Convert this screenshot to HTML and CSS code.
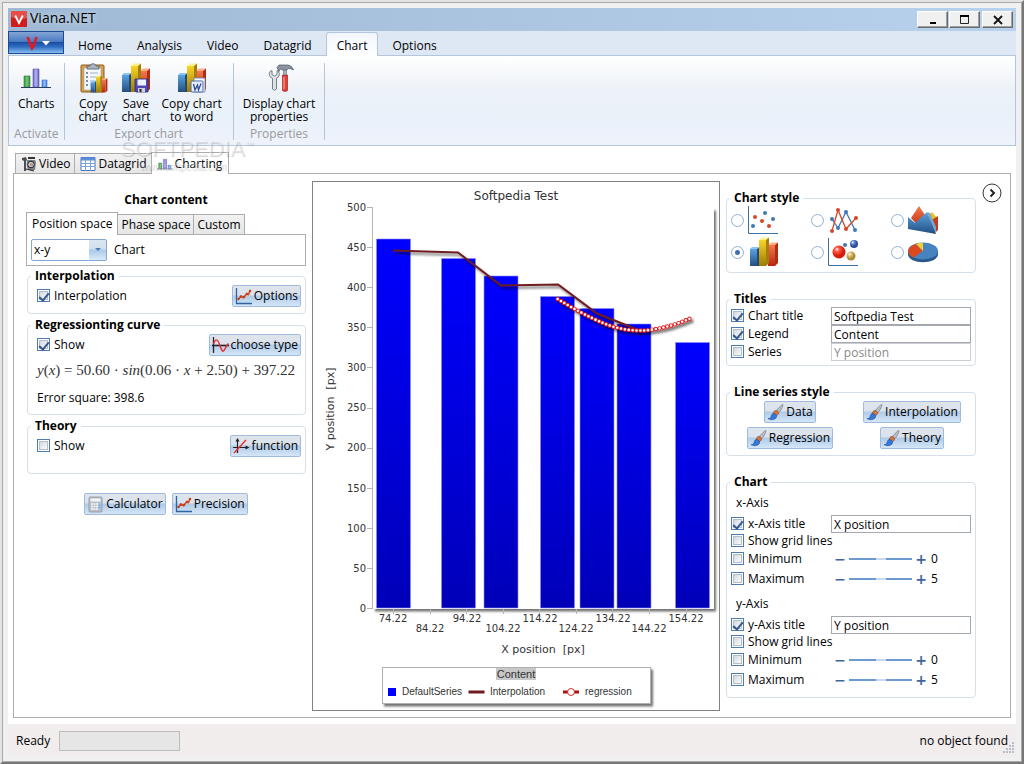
FILE: index.html
```html
<!DOCTYPE html>
<html lang="en">
<head>
<meta charset="utf-8">
<title>Viana.NET</title>
<link rel="stylesheet" href="styles.css">
</head>
<body>
<svg class="defs" width="0" height="0" aria-hidden="true">
  <defs>
    <linearGradient id="gBlue" x2="0" y2="1"><stop offset="0" stop-color="#5aa2e0"/><stop offset="1" stop-color="#234f80"/></linearGradient>
    <linearGradient id="gYel" x2="0" y2="1"><stop offset="0" stop-color="#f7d427"/><stop offset="1" stop-color="#9c7a08"/></linearGradient>
    <linearGradient id="gRed" x2="0" y2="1"><stop offset="0" stop-color="#f47a50"/><stop offset="1" stop-color="#b8260c"/></linearGradient>
    <linearGradient id="gGreen"><stop offset="0" stop-color="#2f9a38"/><stop offset=".5" stop-color="#7cc47c"/><stop offset="1" stop-color="#2f8f38"/></linearGradient>
    <linearGradient id="gViolet"><stop offset="0" stop-color="#6a66c8"/><stop offset=".5" stop-color="#b9b6f3"/><stop offset="1" stop-color="#5e5abc"/></linearGradient>
    <linearGradient id="gSky"><stop offset="0" stop-color="#3f7fe8"/><stop offset=".5" stop-color="#8fbcff"/><stop offset="1" stop-color="#3f7fe8"/></linearGradient>
    <radialGradient id="bRed" cx=".35" cy=".3"><stop offset="0" stop-color="#fff"/><stop offset=".35" stop-color="#ff5a48"/><stop offset="1" stop-color="#d81c0c"/></radialGradient>
    <radialGradient id="bBlue" cx=".35" cy=".3"><stop offset="0" stop-color="#fff"/><stop offset=".4" stop-color="#6488d0"/><stop offset="1" stop-color="#2a4c9c"/></radialGradient>
    <radialGradient id="bGold" cx=".35" cy=".3"><stop offset="0" stop-color="#fff"/><stop offset=".4" stop-color="#e0c070"/><stop offset="1" stop-color="#b08c38"/></radialGradient>
    <symbol id="bars3d" viewBox="0 0 30 30">
      <path d="M1 12h7v17H1z" fill="url(#gBlue)"/><path d="M1 12l2-2h8l-3 2z" fill="#8cc4f2"/><path d="M8 12l3-2v19H8z" fill="#214a78"/>
      <path d="M19 8h7v21h-7z" fill="url(#gRed)"/><path d="M19 8l3-2.500h7L26 8z" fill="#ffab8a"/><path d="M26 8l3-2.500V26l-3 3z" fill="#ad2e10"/>
      <path d="M10 3h7v26h-7z" fill="url(#gYel)"/><path d="M10 3l3-2.500h7L17 3z" fill="#fff08a"/><path d="M17 3l3-2.500V26l-3 3z" fill="#a47f0a"/>
    </symbol>
    <symbol id="bars" viewBox="0 0 30 20">
      <path d="M3 8h6v11H3z" fill="url(#gGreen)" stroke="#2c7d34" stroke-width=".6"/><path d="M12 1h6v18h-6z" fill="url(#gViolet)" stroke="#5a56b0" stroke-width=".6"/><path d="M21 12h5v7h-5z" fill="url(#gSky)" stroke="#3a70d0" stroke-width=".6"/><path d="M0 19.500h30" stroke="#27405e"/>
    </symbol>
    <symbol id="precision" viewBox="0 0 17 17">
      <path d="M1.500 0v15.500H17" fill="none" stroke="#2f64a0" stroke-width="1.300"/>
      <path d="M3 11.500l3-3 2.500 1L12 5.500l1.500 1L15 2.500" fill="none" stroke="#d24a20" stroke-width="1.500"/>
      <g fill="#c83c14"><circle cx="3.500" cy="11" r="1.200"/><circle cx="6" cy="8.500" r="1.300"/><circle cx="9" cy="9" r="1.300"/><circle cx="12" cy="6" r="1.300"/><circle cx="15" cy="3" r="1.200"/></g>
    </symbol>
    <symbol id="brush" viewBox="0 0 17 17">
      <path d="M16 .5c-2 .5-5 4-7 6.500l2.500 2C13.500 7 16 3 16 .5z" fill="#b9bfc8" stroke="#6c7480" stroke-width=".6"/>
      <path d="M9 6.500c-2 0-3 2-2.500 3.500s3 2 4 1 1.300-2.500.5-3.500z" fill="#d8753a" stroke="#8c4218" stroke-width=".6"/>
      <path d="M7 9.500c-2.500 0-2.500 1.500-3 3.500-.5 1.500-2 1.500-3 1.500 2 2 7.500 1.500 8.500-1.500.4-1.500-.8-3-2.500-3.500z" fill="#3478d8" stroke="#1a4c9c" stroke-width=".6"/>
    </symbol>
  </defs>
</svg>
<div class="window">
<div class="frame">
  <header class="titlebar">
    <svg class="applogo" viewBox="0 0 16 16" aria-hidden="true"><rect width="16" height="16" rx="1" fill="#d01c1c"/><path d="M0 0h16v7Q8 10 0 6z" fill="#ef6a66" opacity=".65"/><path d="M4.200 4.500L8 12l3.800-7.500" fill="none" stroke="#fff" stroke-width="1.800"/></svg>
    <h1 class="apptitle">Viana.NET</h1>
    <div class="winbtns">
      <button class="winbtn" aria-label="Minimize"><svg viewBox="0 0 12 12"><path d="M3 9h6" stroke="#000" stroke-width="2"/></svg></button>
      <button class="winbtn" aria-label="Maximize"><svg viewBox="0 0 12 12"><path d="M1.500 2.500h8v7h-8z" fill="none" stroke="#222"/><path d="M1 2h9" stroke="#000" stroke-width="2"/></svg></button>
      <button class="winbtn close" aria-label="Close"><svg viewBox="0 0 12 12"><path d="M2 2l8 8M10 2l-8 8" stroke="#111" stroke-width="1.800"/></svg></button>
    </div>
  </header>
  <nav class="menubar">
    <button class="appbtn" aria-label="Application menu"><svg viewBox="0 0 26 16"><path d="M4.500 2L9 13.500Q11 11 13.500 2" fill="none" stroke="#f01414" stroke-width="2.400"/><path d="M19 6h8l-4 4.500z" fill="#fff"/></svg></button>
    <button class="menutab">Home</button>
    <button class="menutab">Analysis</button>
    <button class="menutab">Video</button>
    <button class="menutab">Datagrid</button>
    <button class="menutab active">Chart</button>
    <button class="menutab">Options</button>
  </nav>
  <section class="ribbon">
    <div class="rgroup">
      <div class="rbuttons"><button class="rbtn"><svg class="ricon" viewBox="0 0 30 30"><use href="#bars" y="5" width="30" height="20"/></svg>Charts</button></div>
      <div class="rlabel">Activate</div>
    </div>
    <div class="rgroup export">
      <div class="rbuttons">
        <button class="rbtn"><svg class="ricon" viewBox="0 0 30 30"><rect x="3" y="2" width="23" height="27" rx="1" fill="#d9a048" stroke="#8a5c1c"/><path d="M6 5h17v22H6z" fill="#f4f7fb" stroke="#9aa4b4" stroke-width=".6"/><path d="M9 6V3h3c0-3 6-3 6 0h3v3z" fill="#a8b4c4" stroke="#505c6c" stroke-width=".8"/><path d="M12 10h8M12 14h8M12 18h6M12 22h5" stroke="#a0aec4"/><g fill="#54688c"><circle cx="9" cy="10" r="1"/><circle cx="9" cy="14" r="1"/><circle cx="9" cy="18" r="1"/><circle cx="9" cy="22" r="1"/></g><use href="#bars3d" x="12" y="12" width="18" height="18"/></svg>Copy<br>chart</button>
        <button class="rbtn"><svg class="ricon" viewBox="0 0 30 30"><use href="#bars3d" width="30" height="30"/><path d="M14 16h13v13H15l-1-1z" fill="#5048b4" stroke="#302878" stroke-width=".8"/><path d="M16.500 16.500h8.500v6h-8.500z" fill="#eef0fb"/><path d="M17 25h7v4h-7z" fill="#d0d0dc"/><path d="M18.500 26h2v3h-2z" fill="#222"/></svg>Save<br>chart</button>
        <button class="rbtn"><svg class="ricon" viewBox="0 0 30 30"><use href="#bars3d" width="30" height="30"/><path d="M17 15h11v14H17z" fill="#f4f8ff" stroke="#6d86b4" stroke-width=".8"/><rect x="14" y="18" width="12" height="11" rx="1" fill="#e9effa" stroke="#4a68a8"/><path d="M16.500 21l1.500 6 2.500-5 1 5 2.500-6.500" fill="none" stroke="#284c98" stroke-width="1.300"/></svg>Copy chart<br>to word</button>
      </div>
      <div class="rlabel">Export chart</div>
    </div>
    <div class="rgroup">
      <div class="rbuttons"><button class="rbtn"><svg class="ricon" viewBox="0 0 30 30"><path d="M6 8.500a4.500 4.500 0 0 0 2.500 6.800V26q2 2.500 4 0V15.300a4.500 4.500 0 0 0 2-6.800l-1.500-1v4l-2.500 1.500L8 11.500v-4z" fill="#dde2e8" stroke="#69747f" stroke-width=".9"/><path d="M18.500 12h5v15.500q-2.500 2-5 0z" fill="#e04038" stroke="#a02018" stroke-width=".7"/><path d="M20 14v12" stroke="#ff9c90" stroke-width="1.200"/><path d="M19.500 5h3v7h-3z" fill="#aab4be" stroke="#5c6874" stroke-width=".6"/><path d="M13 4.500L15 2h9q4 .5 5.500 5-3-2-5.500-1.500L23 7h-5l-1-1h-1l-1 2.500z" fill="#8a95a1" stroke="#4c5660" stroke-width=".7"/></svg>Display chart<br>properties</button></div>
      <div class="rlabel">Properties</div>
    </div>
  </section>

  <main class="workspace">
    <div class="watermark" aria-hidden="true"><b>SOFTPEDIA</b><sup>™</sup><span>www.softpedia.com</span></div>
    <div class="doctabs">
      <button class="doctab"><svg viewBox="0 0 16 16"><path d="M1 2l4-1 1 3-1 1v10H3V5L1 4z" fill="#4b4f55"/><path d="M6 4h8l1 2-1 8H8q-3-2-2-10z" fill="#7a828c"/><path d="M7 1h7v2H7z" fill="#333"/><circle cx="10" cy="8.500" r="3.300" fill="#b7c6da" stroke="#222"/><circle cx="10.500" cy="8.500" r="1.500" fill="#d88a48"/><path d="M5 13l8 2" stroke="#222"/></svg>Video</button>
      <button class="doctab"><svg viewBox="0 0 16 16"><path d="M1 1.500h14v13H1z" fill="#fff" stroke="#4a78c0"/><path d="M1 1.500h14v3H1z" fill="#5b8ddc"/><path d="M1 7.500h14M1 10.500h14M5.500 4v10.500M10.500 4v10.500" stroke="#7ea4dc"/></svg>Datagrid</button>
      <button class="doctab active"><svg viewBox="0 0 16 16"><use href="#bars" y="2" width="16" height="12"/></svg>Charting</button>
    </div>
    <div class="panel">
      <section class="left">
        <h2 class="heading">Chart content</h2>
        <div class="subtabs">
          <button class="subtab active">Position space</button><button class="subtab">Phase space</button><button class="subtab">Custom</button>
        </div>
        <div class="subpanel">
          <span class="combo"><select id="space" aria-label="Axes"><option>x-y</option></select></span>
          <label for="space">Chart</label>
        </div>
        <fieldset class="box">
          <legend>Interpolation</legend>
          <div class="line"><label class="check"><input type="checkbox" checked>Interpolation</label>
          <button class="btn"><svg viewBox="0 0 17 17"><use href="#precision"/></svg>Options</button></div>
        </fieldset>
        <fieldset class="box">
          <legend>Regressionting curve</legend>
          <div class="line"><label class="check"><input type="checkbox" checked>Show</label>
          <button class="btn"><svg viewBox="0 0 17 17"><path d="M1.500 0v16M0 8.500h17" stroke="#222" stroke-width="1.300"/><path d="M1.500 7Q4.500-1.500 7.500 7.500T12 13.500t4.500-7" fill="none" stroke="#f02828" stroke-width="1.400"/></svg>choose type</button></div>
          <div class="formula"><i>y</i>(<i>x</i>) = 50.60 · <i>sin</i>(0.06 · <i>x</i> + 2.50) + 397.22</div>
          <div class="error">Error square: 398.6</div>
        </fieldset>
        <fieldset class="box theory">
          <legend>Theory</legend>
          <div class="line"><label class="check"><input type="checkbox">Show</label>
          <button class="btn"><svg viewBox="0 0 17 17"><path d="M4.500 1v14M0 9.500h14" stroke="#222" stroke-width="1.200"/><path d="M2.500 3.500L4.500 0l2 3.500zM12.500 7.500l4 2-4 2z" fill="#222"/><path d="M1 15L13 2" stroke="#f02828" stroke-width="1.300"/></svg>function</button></div>
        </fieldset>
        <div class="tools">
          <button class="btn"><svg viewBox="0 0 17 17"><rect x="2" y="1" width="13" height="15" rx="1" fill="#b9c0c9" stroke="#8a929c" stroke-width=".8"/><path d="M3.500 2.500h10v3h-10z" fill="#f3f6f8"/><path d="M4 8h9.500M4 10.500h9.500M4 13h9.500" stroke="#f6f6f6" stroke-width="1.600" stroke-dasharray="2 .5"/><path d="M11.500 7.200h2v6.500h-2z" fill="#7fb2e0"/></svg>Calculator</button>
          <button class="btn"><svg viewBox="0 0 17 17"><use href="#precision"/></svg>Precision</button>
        </div>
      </section>

      <figure class="chart">
        <svg viewBox="313 182 406 528" role="img" aria-label="Softpedia Test">
          <defs>
            <linearGradient id="bar" x2="0" y2="1"><stop offset="0" stop-color="#0000ff"/><stop offset="1" stop-color="#0000b8"/></linearGradient>
            <filter id="sh" x="-10%" y="-20%" width="120%" height="150%"><feDropShadow dx="2" dy="2.500" stdDeviation="1.200" flood-opacity=".55"/></filter>
          </defs>
          <text class="ctitle" x="516" y="200" text-anchor="middle">Softpedia Test</text>
          <rect x="373" y="208" width="341" height="401" fill="#fff" filter="url(#sh)"/>
          <path d="M372.500 207v402M367 207.500h5M367 247.500h5M367 287.500h5M367 327.500h5M367 367.500h5M367 408.500h5M367 448.500h5M367 488.500h5M367 528.500h5M367 568.500h5M367 608.500h5M393.500 609v5M430.500 609v5M466.500 609v5M503.500 609v5M539.500 609v5M576.500 609v5M612.500 609v5M649.500 609v5M686.500 609v5" stroke="#b4b4b4" fill="none"/>
          <g fill="url(#bar)" stroke="#8f8ff0" stroke-width=".6">
            <path d="M376.500 239H410.500V608H376.500z"/><path d="M441.500 258.500h34V608h-34z"/><path d="M484 276h34v332h-34z"/><path d="M540.500 296.500h34V608h-34z"/><path d="M580 308.500h34V608h-34z"/><path d="M617 324h34v284h-34z"/><path d="M675.500 342.500h34V608h-34z"/>
          </g>
          <g class="tick" text-anchor="end">
            <text x="366" y="211">500</text><text x="366" y="251">450</text><text x="366" y="291">400</text><text x="366" y="331">350</text><text x="366" y="371">300</text><text x="366" y="411">250</text><text x="366" y="451">200</text><text x="366" y="492">150</text><text x="366" y="532">100</text><text x="366" y="572">50</text><text x="366" y="612">0</text>
          </g>
          <g class="tick" text-anchor="middle">
            <text x="393" y="622">74.22</text><text x="430" y="632">84.22</text><text x="467" y="622">94.22</text><text x="503" y="632">104.22</text><text x="540" y="622">114.22</text><text x="576" y="632">124.22</text><text x="613" y="622">134.22</text><text x="649" y="632">144.22</text><text x="686" y="622">154.22</text>
          </g>
          <text class="axis" x="543" y="653" text-anchor="middle">X position&#160; [px]</text>
          <text class="axis" transform="translate(334 409) rotate(-90)" text-anchor="middle">Y position&#160; [px]</text>
          <path d="M393 250.500L458 252.500 501 285.500 558 284.500 597 313.500 641 331" fill="none" stroke="#6e1c20" stroke-width="2" filter="url(#sh)"/>
          <g fill="none" stroke-linecap="round" stroke-dasharray="0 3.900" filter="url(#sh)">
            <path d="M557.700 299C572 308 590 317.500 603 323S630 331 643 330.500 675 325.500 690.300 318.300" stroke="#e01818" stroke-width="4.400"/>
            <path d="M557.700 299C572 308 590 317.500 603 323S630 331 643 330.500 675 325.500 690.300 318.300" stroke="#fff" stroke-width="2.600"/>
          </g>
          <rect x="382.500" y="667.500" width="268" height="36" fill="#fff" stroke="#b0b0b0" filter="url(#sh)"/>
          <path d="M496 668h40v12h-40z" fill="#c8c8c8"/>
          <text class="ltitle" x="516" y="678" text-anchor="middle">Content</text>
          <path d="M388 688h8v8h-8z" fill="#00f"/>
          <path d="M468.500 692h16" stroke="#6e1c20" stroke-width="3"/>
          <path d="M563 692h16" stroke="#b01010" stroke-width="3"/><circle cx="571" cy="692" r="3.500" fill="#fff" stroke="#d03030"/>
          <g class="ltext"><text x="402" y="695">DefaultSeries</text><text x="490" y="695">Interpolation</text><text x="585" y="695">regression</text></g>
        </svg>
      </figure>

      <section class="right">
        <fieldset class="box styles">
          <legend>Chart style</legend>
          <div class="stylegrid">
            <label class="pick"><input type="radio" name="st" aria-label="Scatter"><svg viewBox="0 0 30 30"><path d="M.500 1v27.500H30" fill="none" stroke="#3a70a8"/><g fill="#d2482a"><circle cx="7" cy="12" r="2"/><circle cx="14" cy="16" r="2"/><circle cx="21" cy="21" r="2"/></g><g fill="#3f78b4"><circle cx="17" cy="8" r="2"/><circle cx="25" cy="14" r="2"/><circle cx="5" cy="21" r="2"/></g></svg></label>
            <label class="pick"><input type="radio" name="st" aria-label="Line"><svg viewBox="0 0 30 30"><path d="M4 14l6 9L18 7l9 18" fill="none" stroke="#3f78b4" stroke-width="1.300"/><path d="M4 26l6-21 8 19 10-11" fill="none" stroke="#d2482a" stroke-width="1.300"/><g fill="#3f78b4"><circle cx="4" cy="14" r="2"/><circle cx="10" cy="23" r="2"/><circle cx="18" cy="7" r="2"/><circle cx="27" cy="25" r="2"/></g><g fill="#d2482a"><circle cx="4" cy="26" r="2"/><circle cx="10" cy="5" r="2"/><circle cx="18" cy="24" r="2"/><circle cx="28" cy="13" r="2"/></g></svg></label>
            <label class="pick"><input type="radio" name="st" aria-label="Area"><svg viewBox="0 0 30 30"><path d="M3 13l8-12 8 12-6 11z" fill="url(#gRed)"/><path d="M19 12l5-5 5 6-3 13z" fill="#e8c418"/><path d="M22 16l8-5v14l-4 4z" fill="#c43c18"/><path d="M0 12l7 6 12-11 9 22-28-5z" fill="url(#gBlue)"/><path d="M19 7l3 1 6 14v7z" fill="#6fa8dc"/></svg></label>
            <label class="pick"><input type="radio" name="st" checked aria-label="Column"><svg viewBox="-1 0 30 30"><use href="#bars3d" width="30" height="30"/></svg></label>
            <label class="pick"><input type="radio" name="st" aria-label="Bubble"><svg viewBox="0 0 30 30"><path d="M.500 1v27.500H30" fill="none" stroke="#3a70a8"/><circle cx="11" cy="15" r="6.500" fill="url(#bRed)"/><circle cx="17" cy="8" r="2" fill="#3f78b4"/><circle cx="26" cy="7" r="4" fill="url(#bBlue)"/><circle cx="23" cy="19" r="4.500" fill="url(#bGold)"/></svg></label>
            <label class="pick"><input type="radio" name="st" aria-label="Pie"><svg viewBox="0 0 30 30"><path d="M0 14v3c0 11 30 11 30 0v-3z" fill="#28598c"/><ellipse cx="15" cy="14" rx="15" ry="8.500" fill="#4683c0"/><path d="M15 14L5.500 20.500C-2 17-2 10 8 7z" fill="#dc4820"/><path d="M15 14L8 7q3-1.500 7-1.500z" fill="#f0cf38"/></svg></label>
          </div>
        </fieldset>
        <fieldset class="box">
          <legend>Titles</legend>
          <div class="prop"><label class="check"><input type="checkbox" checked>Chart title</label><input class="txt" type="text" value="Softpedia Test" aria-label="Chart title text"></div>
          <div class="prop"><label class="check"><input type="checkbox" checked>Legend</label><input class="txt" type="text" value="Content" aria-label="Legend text"></div>
          <div class="prop"><label class="check"><input type="checkbox">Series</label><input class="txt" type="text" value="Y position" disabled aria-label="Series text"></div>
        </fieldset>
        <fieldset class="box">
          <legend>Line series style</legend>
          <div class="seriesgrid">
            <button class="btn"><svg viewBox="0 0 17 17"><use href="#brush"/></svg>Data</button>
            <button class="btn"><svg viewBox="0 0 17 17"><use href="#brush"/></svg>Interpolation</button>
            <button class="btn"><svg viewBox="0 0 17 17"><use href="#brush"/></svg>Regression</button>
            <button class="btn"><svg viewBox="0 0 17 17"><use href="#brush"/></svg>Theory</button>
          </div>
        </fieldset>
        <fieldset class="box axes">
          <legend>Chart</legend>
          <div class="axisname">x-Axis</div>
          <div class="prop"><label class="check"><input type="checkbox" checked>x-Axis title</label><input class="txt" type="text" value="X position" aria-label="x-Axis title text"></div>
          <div class="prop grid"><label class="check"><input type="checkbox">Show grid lines</label></div>
          <div class="prop lim"><label class="check"><input type="checkbox">Minimum</label><div class="slider"><button aria-label="Decrease">−</button><input type="range" aria-label="x minimum"><button aria-label="Increase">+</button><output>0</output></div></div>
          <div class="prop lim"><label class="check"><input type="checkbox">Maximum</label><div class="slider"><button aria-label="Decrease">−</button><input type="range" aria-label="x maximum"><button aria-label="Increase">+</button><output>5</output></div></div>
          <div class="axisname">y-Axis</div>
          <div class="prop"><label class="check"><input type="checkbox" checked>y-Axis title</label><input class="txt" type="text" value="Y position" aria-label="y-Axis title text"></div>
          <div class="prop grid"><label class="check"><input type="checkbox">Show grid lines</label></div>
          <div class="prop lim"><label class="check"><input type="checkbox">Minimum</label><div class="slider"><button aria-label="Decrease">−</button><input type="range" aria-label="y minimum"><button aria-label="Increase">+</button><output>0</output></div></div>
          <div class="prop lim"><label class="check"><input type="checkbox">Maximum</label><div class="slider"><button aria-label="Decrease">−</button><input type="range" aria-label="y maximum"><button aria-label="Increase">+</button><output>5</output></div></div>
        </fieldset>
      </section>
      <button class="expander" aria-label="Collapse"><svg viewBox="0 0 20 20"><circle cx="10" cy="10" r="9" fill="#fff" stroke="#333"/><path d="M8.500 6.500L12 10l-3.500 3.500" fill="none" stroke="#222" stroke-width="2"/></svg></button>
    </div>
  </main>
  <footer class="status">
    <span>Ready</span><div class="progress" role="progressbar" aria-label="Progress"></div>
    <span class="found">no object found</span>
    <svg class="grip" viewBox="0 0 12 12"><path d="M9 0h2v2H9zM6 3h2v2H6zM9 3h2v2H9zM3 6h2v2H3zM6 6h2v2H6zM9 6h2v2H9zM0 9h2v2H0zM3 9h2v2H3zM6 9h2v2H6zM9 9h2v2H9z" fill="#b8bfc8"/></svg>
  </footer>
</div>
</div>
</body>
</html>
```
FILE: styles.css
```css
* { box-sizing: border-box; }
body { margin: 0; font: 12px/16px "Open Sans", "Noto Sans", sans-serif; color: #000; }
button, input, select { font: inherit; color: inherit; }
button { margin: 0; padding: 0; border: 0; background: none; white-space: nowrap; }
h1, h2, figure { margin: 0; }
.defs { position: absolute; }

.window { min-height: 100vh; display: flex; border: 2px solid; border-color: #e3e3e3 #777 #777 #e3e3e3; }
.frame { flex: 1; min-width: 0; display: flex; flex-direction: column; border: 1px solid #aaa; padding: 5px; background: #f0f0f0; }

.titlebar { display: flex; height: 23px; padding: 3px 3px 0 3px; background: linear-gradient(90deg, #9fb9d5, #b8d1ed); }
.applogo { width: 16px; height: 16px; }
.apptitle { margin-left: 3px; font-size: 14px; line-height: 14px; font-weight: 400; text-shadow: 0 0 5px #dde8f4; }
.winbtns { margin-left: auto; display: flex; gap: 1px; }
.winbtn { width: 31px; height: 17px; background: #f0f0f0; border: 1px solid; border-color: #fff #696969 #696969 #fff; box-shadow: inset -1px -1px #a0a0a0; display: grid; place-items: center; }
.winbtn.close { margin-left: 1px; }
.winbtn svg { width: 12px; height: 12px; }

.menubar { display: flex; height: 24px; background: #dee8f4; }
.appbtn { width: 56px; height: 23px; margin-right: 3px; border: 1px solid #1c4c94; background: linear-gradient(#85a5d4, #4a7cc4 45%, #1c4fa4 50%, #2f6cc0 70%, #86bdf0); display: grid; place-items: center; }
.appbtn svg { width: 26px; height: 16px; overflow: visible; }
.menutab { padding: 4px 10px 0; margin-right: 3px; border: 1px solid transparent; border-bottom: 0; }
.menutab.active { background: linear-gradient(#f2f6fc, #fff); border-color: #b4c6dc; border-radius: 3px 3px 0 0; margin-top: 1px; margin-bottom: -1px; padding-top: 3px; z-index: 1; }

.ribbon { display: flex; height: 91px; border: 1px solid #b4c6dc; background: linear-gradient(#fff, #edf2f8 38%, #e9f1f9 65%, #eef2fb); padding: 7px 0 5px; }
.rgroup { display: flex; flex-direction: column; justify-content: space-between; border-right: 1px solid #b4c6dc; padding: 0 5px; }
.rgroup.export { padding: 0 7px; }
.rbuttons { display: flex; justify-content: center; }
.rbtn { display: flex; flex-direction: column; align-items: center; min-width: 43px; padding: 0 4px; line-height: 13px; }
.ricon { width: 30px; height: 30px; margin-bottom: 4px; }
.rlabel { color: #9a9a9a; text-align: center; line-height: 13px; }

.workspace { position: relative; flex: 1; display: flex; flex-direction: column; background: #fff; padding: 6px 5px 6px; }
.watermark { position: absolute; left: 112px; top: -9px; font: 22px/24px "Liberation Sans", sans-serif; color: rgba(255,255,255,.35); text-shadow: 1px 1px 1px rgba(80,80,80,.25); z-index: 2; pointer-events: none; }
.watermark b { font-weight: 400; }
.watermark sup { font-size: 9px; line-height: 9px; }
.watermark span { display: block; margin-left: 20px; font-size: 10px; line-height: 12px; }
.doctabs { display: flex; align-items: flex-end; padding-left: 2px; }
.doctab { display: flex; align-items: center; gap: 2px; height: 20px; padding: 0 4px 0 5px; border: 1px solid #acacac; border-bottom: 0; border-right: 0; background: linear-gradient(#f2f2f2, #e6e6e6); }
.doctab svg { width: 16px; height: 16px; }
.doctab.active { height: 22px; margin-bottom: -1px; background: #fff; border-right: 1px solid #acacac; padding-right: 6px; z-index: 1; }
.panel { flex: 1; display: grid; grid-template-columns: 280px minmax(0, 1fr) 250px 20px; gap: 6px; align-items: start; border: 1px solid #acacac; padding: 7px 8px 6px 12px; }

.left { padding-top: 11px; }
.heading { font-size: 12px; line-height: 16px; font-weight: 700; text-align: center; }
.subtabs { display: flex; align-items: flex-end; margin-top: 4px; }
.subtab { height: 20px; padding: 0 3px; border: 1px solid #acacac; border-left: 0; border-bottom: 0; background: linear-gradient(#f2f2f2, #e6e6e6); }
.subtab.active { height: 23px; padding: 0 5px; margin-bottom: -1px; border-left: 1px solid #acacac; background: #fff; z-index: 1; }
.subpanel { display: flex; align-items: center; gap: 7px; height: 32px; padding: 0 4px; border: 1px solid #acacac; }
.combo { position: relative; width: 76px; height: 22px; }
.combo select { appearance: none; width: 100%; height: 22px; padding: 0 2px; border: 1px solid #84a8d4; border-radius: 2px; background: linear-gradient(#dce6f1, #d0dff0 45%, #a9c8e8 50%, #dcebfa) right / 17px 100% no-repeat #fff; }
.combo::after { content: ""; position: absolute; right: 6px; top: 9px; border: 3px solid transparent; border-top-color: #4a7ab8; pointer-events: none; }

.box { min-width: 0; margin: 0; padding: 0 4px 4px; border: 1px solid #d5e0e9; border-radius: 4px; }
.box legend { margin-left: -1px; padding: 0 4px; font-weight: 700; line-height: 16px; }
.left .box { margin: 2px 0 3px 1px; padding: 0 4px 6px 9px; }
.left .box + .box { margin-top: 0; }
.left .box legend { margin-left: -6px; }
.left .box.theory { padding-bottom: 16px; }
.line { display: flex; justify-content: space-between; align-items: center; padding-top: 1px; }
.check { display: flex; align-items: center; gap: 4px; white-space: nowrap; }
.check input { appearance: none; flex: none; width: 13px; height: 13px; margin: 0 0 2px; border: 1px solid #4f7bb4; background: linear-gradient(135deg, #cfd4dc, #fff) content-box; padding: 1px; display: grid; place-items: center; outline: 1px solid #b4bfcc; outline-offset: -3px; }
.check input:checked::after { content: ""; width: 4px; height: 8px; border: solid #35588f; border-width: 0 2px 2px 0; transform: rotate(40deg); }
.btn { display: inline-flex; align-items: center; gap: 2px; height: 22px; padding: 0 2px; border: 1px solid #9dbcdf; border-radius: 2px; background: linear-gradient(#e0e4ea, #d9e2ed 45%, #afcae8 50%, #d5e6f7); }
.btn svg { width: 17px; height: 17px; }
.formula { font: 15px/18px "Liberation Serif", serif; color: #333; white-space: nowrap; margin-top: 5px; }
.error { margin: 11px 0 2px; }
.tools { display: flex; justify-content: center; gap: 6px; margin-top: 19px; }

.chart { border: 1px solid #828282; }
.chart svg { display: block; width: 100%; }
.chart text { font-family: "DejaVu Sans", sans-serif; fill: #333; }
.chart .ctitle { font-size: 12px; }
.chart .tick text { font-size: 10px; }
.chart .axis { font-size: 11px; white-space: pre; }
.chart .ltitle { font: 11px "Liberation Sans", sans-serif; }
.chart .ltext text { font: 10px "Liberation Sans", sans-serif; }

.right { display: flex; flex-direction: column; gap: 18px; padding-top: 9px; }
.stylegrid { display: grid; grid-template-columns: repeat(3, 80px); margin-top: -2px; }
.pick { display: flex; align-items: center; gap: 4px; height: 32px; }
.pick svg { width: 30px; height: 30px; }
.pick input { appearance: none; width: 13px; height: 13px; margin: 0; border: 1px solid #8fb0d4; border-radius: 50%; background: #fff; }
.pick input:checked { background: radial-gradient(circle, #3f70b0 2px, #fff 3px); }
.prop { display: grid; grid-template-columns: 100px 1fr; align-items: center; height: 18px; }
.txt { width: 100%; height: 18px; padding: 0 2px; border: 1px solid #a6a8b0; background: #fff; }
.txt:disabled { color: #8a8a8a; border-color: #cdced3; }
.seriesgrid { display: grid; grid-template-columns: 1fr 1fr; justify-items: center; gap: 4px; padding: 1px 0 2px; }
.box.axes { padding-bottom: 7px; }
.axisname { height: 25px; padding: 5px 0 0 5px; }
.lim + .axisname { margin-top: 2px; }
.prop.grid { height: 16px; }
.prop.lim { height: 20px; }
.slider { display: grid; grid-template-columns: 18px 63px 18px 1fr; align-items: center; }
.slider button { font: 700 14px/16px "DejaVu Sans", sans-serif; color: #41669c; }
.slider input { appearance: none; width: 100%; height: 2px; margin: 0; background: #6e9ad2; }
.slider input::-webkit-slider-thumb { appearance: none; width: 10px; height: 2px; background: #c9d9ec; }
.slider output { padding-left: 1px; }
.expander { width: 20px; height: 20px; margin-top: 2px; }
.expander svg { display: block; width: 20px; height: 20px; }

.status { position: relative; display: flex; align-items: center; gap: 9px; height: 32px; padding: 1px 8px 0; background: #f0edec; }
.progress { width: 121px; height: 20px; border: 1px solid #bcbcbc; background: #e6e6e6; }
.found { margin-left: auto; }
.grip { position: absolute; right: 1px; bottom: 2px; width: 12px; height: 12px; }
```
